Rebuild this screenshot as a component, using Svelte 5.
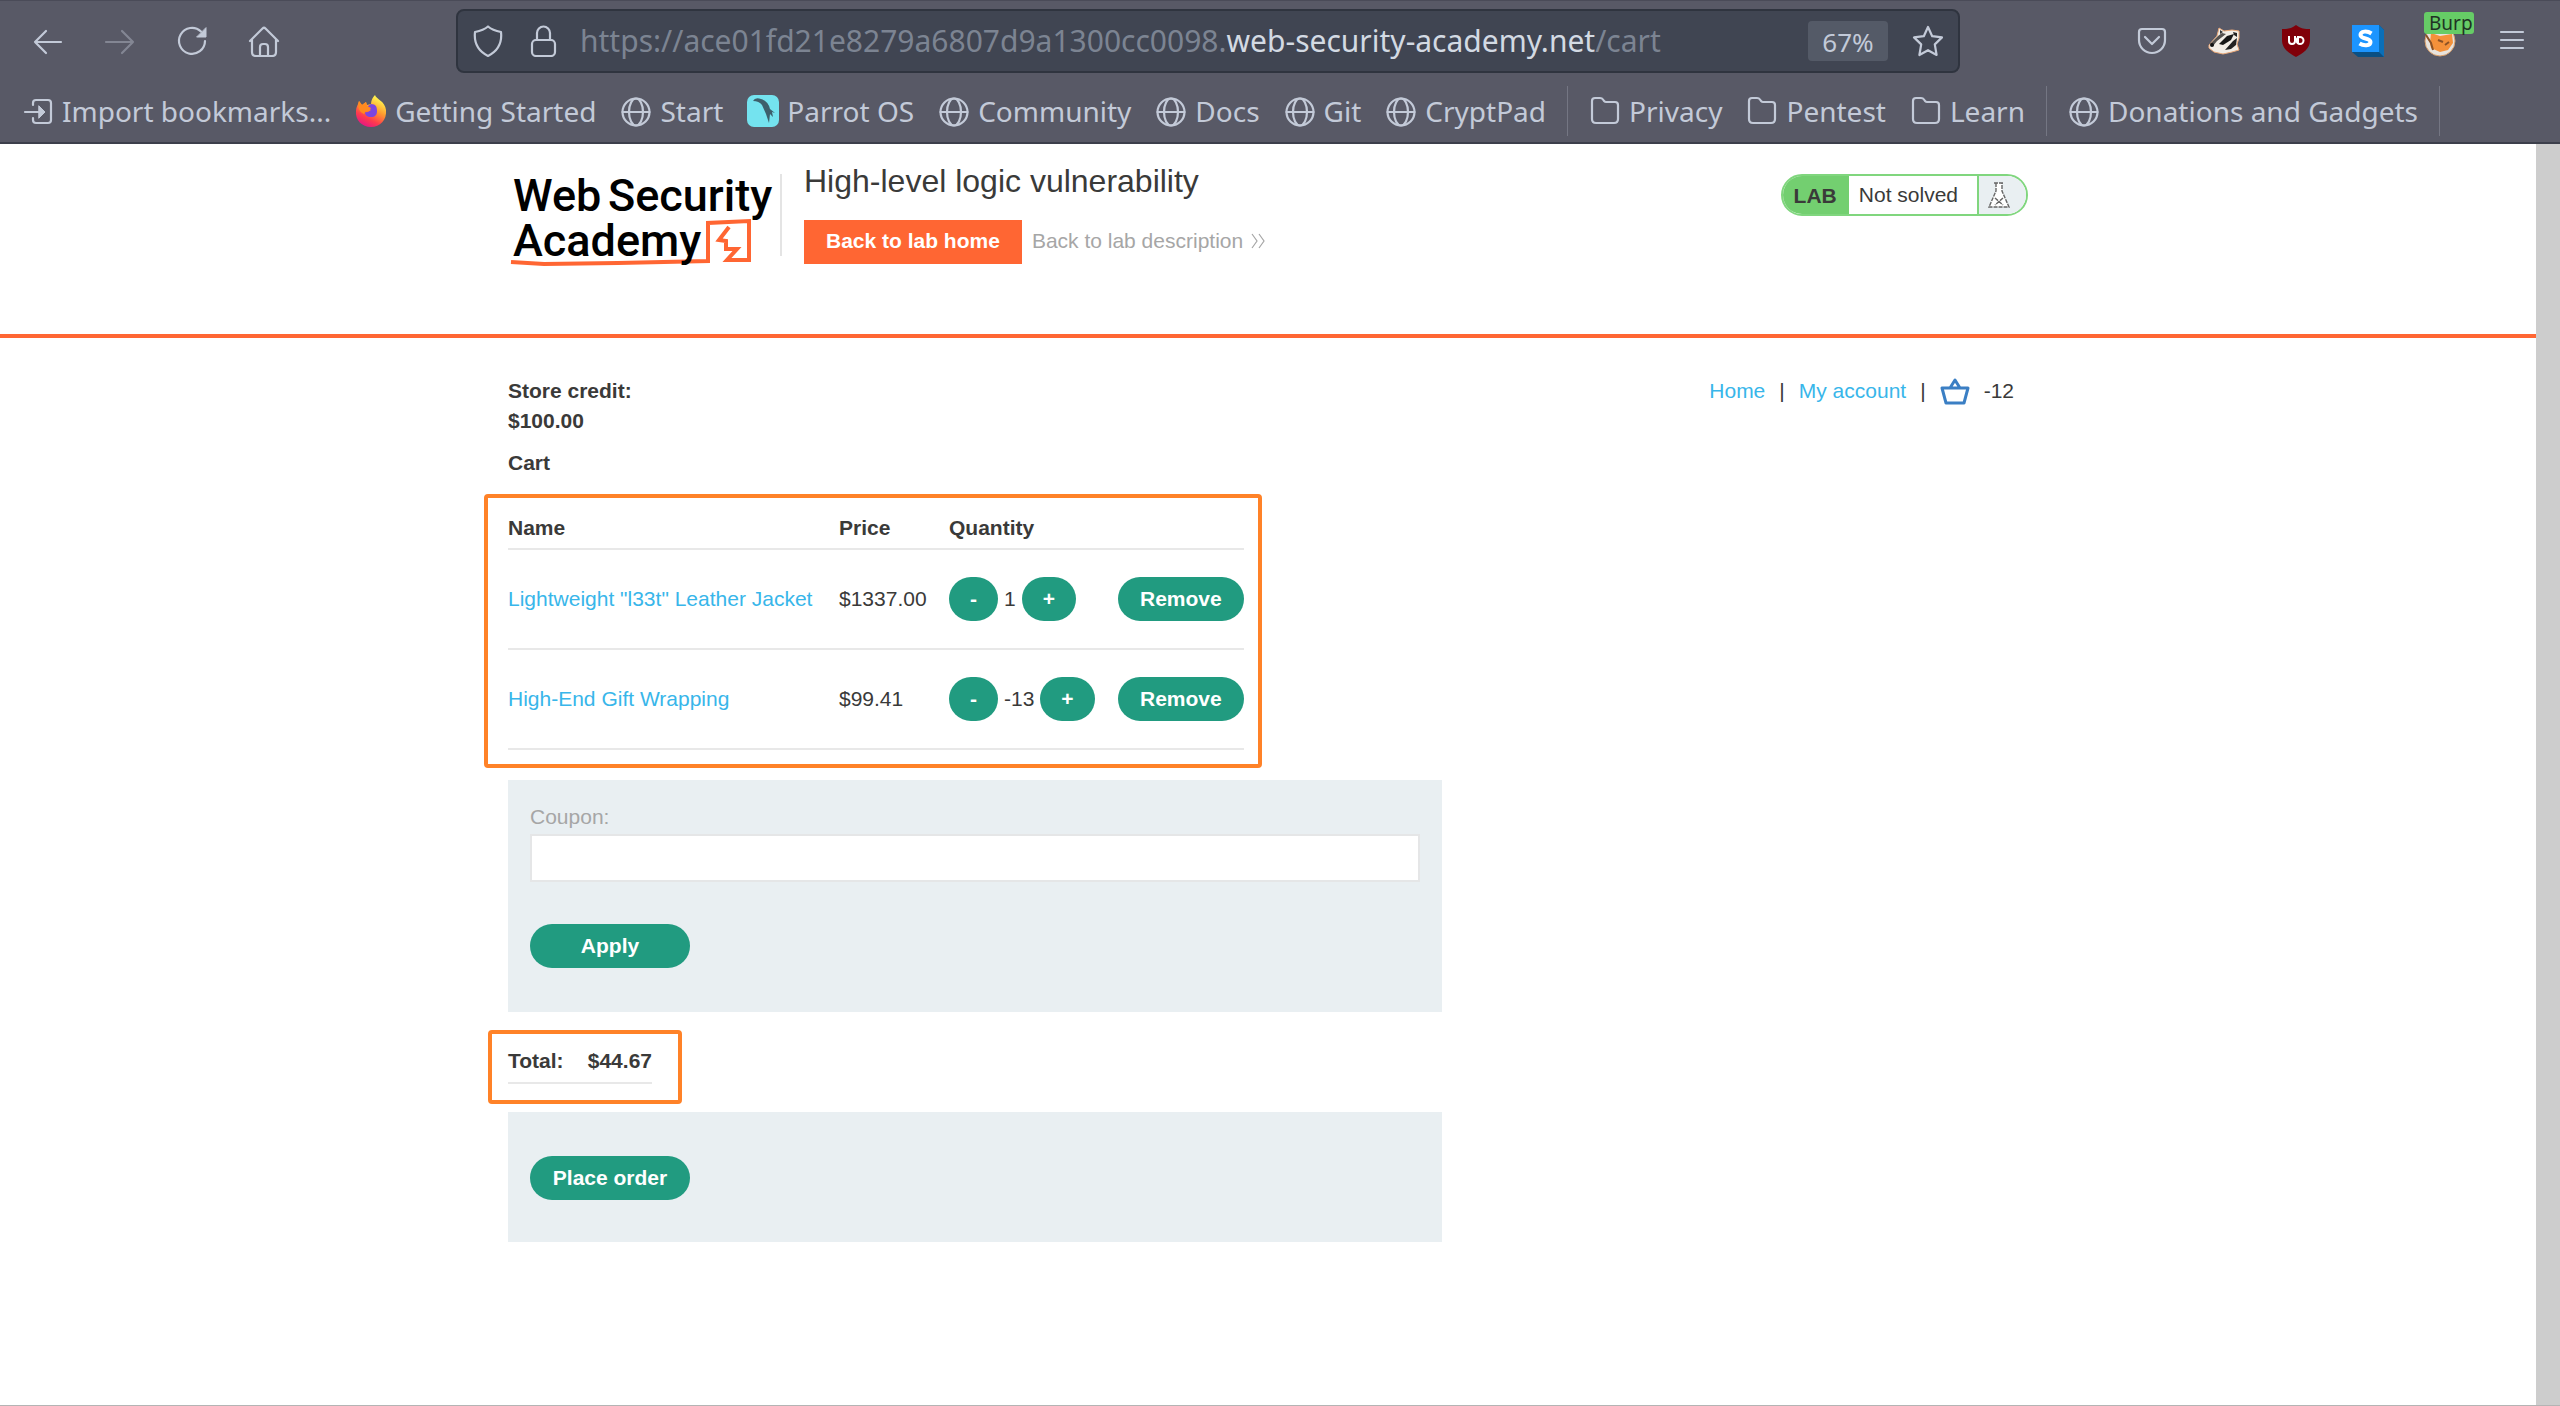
<script>
  const bookmarks = [
    { label: 'Import bookmarks...', icon: 'import' },
    { label: 'Getting Started', icon: 'firefox' },
    { label: 'Start', icon: 'globe' },
    { label: 'Parrot OS', icon: 'parrot' },
    { label: 'Community', icon: 'globe' },
    { label: 'Docs', icon: 'globe' },
    { label: 'Git', icon: 'globe' },
    { label: 'CryptPad', icon: 'globe', last: true },
    { label: 'Privacy', icon: 'folder' },
    { label: 'Pentest', icon: 'folder' },
    { label: 'Learn', icon: 'folder', last: true },
    { label: 'Donations and Gadgets', icon: 'globe', last: true }
  ];

  const items = [
    { name: 'Lightweight "l33t" Leather Jacket', price: '$1337.00', qty: 1 },
    { name: 'High-End Gift Wrapping', price: '$99.41', qty: -13 }
  ];
</script>

<div class="window">
  <header class="chrome">
    <div class="toolbar">
      <nav class="tools" aria-label="Browser navigation">
        <button class="tool" aria-label="Back">
          <svg class="icon" viewBox="0 0 32 32"><path d="M29 17H3M14 6L3 17l11 11" /></svg>
        </button>
        <button class="tool dim" aria-label="Forward">
          <svg class="icon" viewBox="0 0 32 32"><path d="M2 17h27M18 6l11 11-11 11" /></svg>
        </button>
        <button class="tool" aria-label="Reload">
          <svg class="icon" viewBox="0 0 32 32">
            <path d="M29 16a13 13 0 1 1-4-9.500" />
            <path class="solid" d="M30 3v9h-9z" />
          </svg>
        </button>
        <button class="tool" aria-label="Home">
          <svg class="icon" viewBox="0 0 32 32">
            <path d="M2 16L14.500 3.500q1.500-1.500 3 0L30 16M4 14v13q0 4 4 4h16q4 0 4-4V14" />
            <path d="M12 31V22q0-3 3-3h2q3 0 3 3v9" />
          </svg>
        </button>
      </nav>

      <div class="address">
        <svg class="icon" viewBox="0 0 32 32">
          <path d="M16 1.500C12 5 8 6 3 7c-1 9 1 18 13 24C28 25 30 16 29 7C24 6 20 5 16 1.500z" />
        </svg>
        <svg class="icon lock" viewBox="0 0 32 32">
          <rect x="4" y="15" width="23" height="16" rx="4" />
          <path d="M9 15V8a6.500 6.500 0 0 1 13 0v7" />
        </svg>
        <div class="url" role="textbox" tabindex="0" contenteditable="true" aria-label="Address">https://ace01fd21e8279a6807d9a1300cc0098.<b>web-security-academy.net</b>/cart</div>
        <button class="zoom">67%</button>
        <button class="star" aria-label="Bookmark this page">
          <svg class="icon" viewBox="0 0 32 32">
            <path d="M16 2l4.200 9.200 9.800 1.200-7.200 7 1.800 10.600L16 25.200 7.400 30l1.800-10.600-7.200-7 9.800-1.200z" />
          </svg>
        </button>
      </div>

      <div class="tools">
        <button class="tool" aria-label="Pocket">
          <svg class="icon" viewBox="0 0 32 32">
            <path d="M6 4h20q3 0 3 3v8a13 13 0 0 1-26 0V7q0-3 3-3z" />
            <path d="M9 12l7 7 7-7" />
          </svg>
        </button>
        <button class="tool" aria-label="Privacy Badger">
          <svg class="pic" viewBox="0 0 32 32">
            <path d="M1 20L9 11l2-8 5 3 8-1 7 1 0 7-2 6 2 6-7 2-9 2-9-2-5-4z" fill="#f2ede6" stroke="#e9a878" />
            <path d="M2 19l8-8 4-3 4 1-9 7-4 5z" fill="#55524f" />
            <path d="M11 19l8-8 7-2-3 6-8 5z" fill="#171717" />
            <path d="M25 7l4 1v4l-3-2zM25 16l4-3-1 7-5 4-6 1z" fill="#222" />
            <path d="M12 5l3 2-3 2z" fill="#333" />
            <circle cx="4" cy="20" r="2" fill="#111" />
          </svg>
        </button>
        <button class="tool" aria-label="uBlock Origin">
          <svg class="pic" viewBox="0 0 32 32">
            <path d="M16 0c5 4 9 4 14 4v11c0 9-7 13-14 17C9 28 2 24 2 15V4c5 0 9 0 14-4z" fill="#800009" />
            <path d="M9 11v5q0 3 3 3t3-3v-5M18 11v8" fill="none" stroke="#fff" stroke-width="2" />
            <circle cx="20" cy="15.500" r="3.500" fill="none" stroke="#fff" stroke-width="2" />
          </svg>
        </button>
        <button class="tool" aria-label="Stylus">
          <svg class="pic" viewBox="0 0 32 32">
            <path d="M27 0l5 5v27H6l-6-5z" fill="#0b4f82" />
            <path d="M27 0l5 5v27l-5-5z" fill="#0a6fb8" />
            <path d="M0 0h27v27H0z" fill="#1c95ff" />
            <path d="M19.500 8.500C15 5.500 8.500 6 8.500 10c0 4.500 10 2.500 10 7 0 4-7 4-11 1.500" fill="none" stroke="#fff" stroke-width="4" />
          </svg>
        </button>
        <button class="tool badge-host">
          <svg class="pic" viewBox="0 0 32 32">
            <circle cx="16" cy="16" r="15" fill="#e7e3dd" stroke="#d9a06c" />
            <path d="M7 8l9 3 12-2 1 9-5 7-8 2-9-4-1-5z" fill="#f4913a" />
            <path d="M2 10l5 8 2 7M14 15l5 2M21 20l4-3" fill="none" stroke="#8a5226" stroke-width="2" />
          </svg>
          <span class="badge">Burp</span>
        </button>
        <button class="tool" aria-label="Menu">
          <svg class="icon" viewBox="0 0 32 32"><path d="M5 7h22M5 15h22M5 23h22" /></svg>
        </button>
      </div>
    </div>

    <nav class="bookmarks" aria-label="Bookmarks">
      {#each bookmarks as mark}
        <a class="bookmark" href="#bookmark">
          {#if mark.icon === 'globe'}
            <svg class="icon" viewBox="0 0 32 32">
              <circle cx="16" cy="17" r="13.500" />
              <ellipse cx="16" cy="17" rx="7" ry="13.500" />
              <path d="M2.500 17h27" />
            </svg>
          {:else if mark.icon === 'folder'}
            <svg class="icon" viewBox="0 0 32 32">
              <path d="M3 6q0-3 3-3h5q2 0 3 1.500l1 1.500q1 1 2 1h9q3 0 3 3v14q0 4-4 4H7q-4 0-4-4z" />
            </svg>
          {:else if mark.icon === 'import'}
            <svg class="icon" viewBox="0 0 32 32">
              <path d="M11 10V8q0-3 3-3h12q3 0 3 3v17q0 3-3 3H14q-3 0-3-3v-2M3 17h16" />
              <path class="solid" d="M17 11l6 6-6 6z" />
            </svg>
          {:else if mark.icon === 'firefox'}
            <svg class="pic" viewBox="0 0 32 32">
              <defs>
                <linearGradient id="flame" x1="0.8" y1="0" x2="0.3" y2="1">
                  <stop offset="0.1" stop-color="#fff44f" />
                  <stop offset="0.45" stop-color="#ff9a2e" />
                  <stop offset="0.75" stop-color="#ff3a4d" />
                  <stop offset="1" stop-color="#e31587" />
                </linearGradient>
              </defs>
              <path d="M20 0c1 4 10 6 11 15 1 10-6 17-15 17S0 25 1 16c0-4 2-6 3-10l3 4 4-3 1 3 4-1c0-4 2-7 4-9z" fill="url(#flame)" />
              <path d="M16 9c5 0 6 3 6 7s-2 6-6 6-6-2-6-5c3 1 4-1 6-2-2-1-3-2-3-4z" fill="#7b45e0" />
              <path d="M4 6l3 4 4-3 1 4 4 2-2 3c-3 0-4 1-5 3-5-2-7-7-5-13z" fill="#ff8a1f" />
            </svg>
          {:else}
            <svg class="pic" viewBox="0 0 32 32">
              <rect width="32" height="32" rx="7" fill="#74e3ef" />
              <path d="M6 6q2-4 8-2 7 2 9 10l5 4-3-1 1 5-3-3-1 9-3-9-4-9q-3-4-9-4z" fill="#3d5f6b" />
            </svg>
          {/if}
          <span>{mark.label}</span>
        </a>
        {#if mark.last}<span class="divider"></span>{/if}
      {/each}
    </nav>
  </header>

  <div class="viewport">
    <div class="page">
      <header class="lab">
        <div class="container lab-row">
          <svg class="logo" viewBox="0 0 272 104" role="img" aria-label="Web Security Academy">
            <text x="5" y="43">Web</text>
            <text x="100" y="43">Security</text>
            <path d="M3 94L36 96 110 95 200 93V55L241 53V92H219L229 81H218V73L211 72 221 59" fill="none" stroke="#ff6633" stroke-width="4" />
            <text x="5" y="88">Academy</text>
          </svg>
          <div class="title-block">
            <h2>High-level logic vulnerability</h2>
            <div class="actions">
              <a class="lab-home" href="#lab">Back to lab home</a>
              <a class="lab-desc" href="#description">Back to lab description
                <svg viewBox="0 0 16 16"><path d="M2 1l5 7-5 7M9 1l5 7-5 7" /></svg>
              </a>
            </div>
          </div>
          <div class="status">
            <strong>LAB</strong>
            <span class="state">Not solved</span>
            <span class="flask">
              <svg viewBox="0 0 24 28">
                <path d="M7 2h10M9 2v8L2 26h20L15 10V2" />
                <path d="M8 17l8 7M16 17l-8 7" />
              </svg>
            </span>
          </div>
        </div>
      </header>

      <main class="container">
        <div class="top">
          <div class="credit">
            <strong>Store credit:</strong>
            <strong>$100.00</strong>
          </div>
          <nav class="links" aria-label="Shop">
            <a href="#home">Home</a><span>|</span><a href="#account">My account</a><span>|</span>
            <a class="basket" href="#cart" aria-label="Cart">
              <svg viewBox="0 0 30 28"><path d="M2 11h26L24 26H6zM10 11l5-8 5 8" /></svg>
            </a>
            <span>-12</span>
          </nav>
        </div>

        <h1>Cart</h1>

        <div class="marked cart-mark">
          <table class="cart">
            <thead>
              <tr><th class="c-name">Name</th><th class="c-price">Price</th><th class="c-qty">Quantity</th><th class="c-remove"></th></tr>
            </thead>
            <tbody>
              {#each items as item}
                <tr>
                  <td><a href="#product">{item.name}</a></td>
                  <td>{item.price}</td>
                  <td>
                    <div class="qty">
                      <button class="btn step" aria-label="Decrease quantity">-</button>
                      <span>{item.qty}</span>
                      <button class="btn step" aria-label="Increase quantity">+</button>
                    </div>
                  </td>
                  <td><button class="btn">Remove</button></td>
                </tr>
              {/each}
            </tbody>
          </table>
        </div>

        <form class="panel coupon" onsubmit={(e) => e.preventDefault()}>
          <label for="coupon">Coupon:</label>
          <input id="coupon" type="text" />
          <button class="btn wide">Apply</button>
        </form>

        <div class="marked total-mark">
          <table class="total">
            <tbody><tr><th>Total:</th><th>$44.67</th></tr></tbody>
          </table>
        </div>

        <form class="panel order" onsubmit={(e) => e.preventDefault()}>
          <button class="btn wide">Place order</button>
        </form>
      </main>
    </div>
    <div class="scrollbar"></div>
  </div>
</div>

<style>
  :global(body) {
    margin: 0;
    background: #fff;
  }
  * {
    box-sizing: border-box;
  }
  button {
    border: 0;
    padding: 0;
    background: none;
    font: inherit;
    color: inherit;
    cursor: pointer;
  }
  a {
    text-decoration: none;
  }
  svg {
    display: block;
    flex: none;
  }
  .window {
    display: flex;
    flex-direction: column;
    min-height: 100vh;
    border-bottom: 1px solid #b4b4b4;
  }

  /* Browser chrome */
  .chrome {
    background: #585966;
    border-top: 1px solid #4a4b58;
    border-bottom: 2px solid #3c3f4b;
    color: #c3cad8;
    font-family: 'Noto Sans', sans-serif;
    font-size: 28px;
  }
  .toolbar {
    display: flex;
    align-items: center;
    gap: 156px;
    height: 79px;
    padding: 0 12px;
  }
  .tools {
    display: flex;
  }
  .tool {
    display: flex;
    align-items: center;
    justify-content: center;
    width: 72px;
    height: 64px;
  }
  .dim {
    opacity: 0.4;
  }
  .icon,
  .pic {
    width: 32px;
    height: 32px;
  }
  .icon {
    fill: none;
    stroke: #c3cad8;
    stroke-width: 2.2;
    stroke-linecap: round;
    stroke-linejoin: round;
  }
  .icon .solid {
    fill: #c3cad8;
    stroke-width: 1;
  }
  .address {
    flex: 1;
    display: flex;
    align-items: center;
    height: 64px;
    padding: 0 14px;
    background: #404552;
    border: 2px solid #2f343f;
    border-radius: 8px;
  }
  .lock {
    margin: 0 20px 0 24px;
  }
  .url {
    flex: 1;
    color: #7c8492;
    font-size: 30px;
    line-height: 40px;
    white-space: nowrap;
    outline: none;
  }
  .url b {
    color: #d3dae3;
    font-weight: 400;
  }
  .zoom {
    width: 80px;
    height: 40px;
    margin-right: 24px;
    background: #545a67;
    border-radius: 4px;
    font-size: 26px;
    line-height: 42px;
  }
  .badge-host {
    position: relative;
  }
  .badge {
    position: absolute;
    top: 3px;
    left: 20px;
    padding: 0 1px 0 5px;
    background: #66cc66;
    border-radius: 3px;
    color: #1f3324;
    font-size: 19px;
    line-height: 22px;
  }
  .bookmarks {
    display: flex;
    align-items: center;
    gap: 24px;
    height: 62px;
    padding: 0 22px;
    white-space: nowrap;
  }
  .bookmark {
    display: flex;
    align-items: center;
    gap: 8px;
    color: inherit;
    line-height: 40px;
  }
  .divider {
    width: 1px;
    height: 50px;
    margin: 0 -3px;
    background: #747683;
  }

  /* Page */
  .viewport {
    flex: 1;
    display: flex;
  }
  .scrollbar {
    width: 24px;
    background: #cdcdcd;
  }
  .page {
    flex: 1;
    background: #fff;
    color: #3a3a39;
    font-family: 'Liberation Sans', Arial, sans-serif;
    font-size: 21px;
    line-height: 30px;
  }
  .page a {
    color: #38b6ea;
  }
  .container {
    max-width: 1520px;
    margin: 0 auto;
  }
  .lab {
    height: 194px;
    border-bottom: 4px solid #ff6633;
  }
  .lab-row {
    display: flex;
    align-items: flex-start;
    padding-top: 24px;
  }
  .logo {
    width: 272px;
    height: 104px;
  }
  .logo text {
    font-family: Roboto, sans-serif;
    font-size: 45px;
    font-weight: 500;
    fill: #000;
  }
  .title-block {
    margin-top: 6px;
    height: 82px;
    padding-left: 22px;
    border-left: 2px solid #e4e4e4;
  }
  h2 {
    margin: -12px 0 20px;
    font-size: 32px;
    font-weight: 400;
    line-height: 38px;
  }
  .actions {
    display: flex;
    align-items: flex-start;
    gap: 10px;
    line-height: 42px;
  }
  .page .lab-home {
    padding: 0 22px 2px;
    background: #ff6633;
    color: #fff;
    font-weight: 700;
  }
  .page .lab-desc {
    display: flex;
    align-items: center;
    gap: 7px;
    color: #a6a6a6;
  }
  .lab-desc svg {
    width: 16px;
    height: 16px;
    fill: none;
    stroke: #a6a6a6;
    stroke-width: 1.2;
  }
  .status {
    display: flex;
    height: 42px;
    margin: 6px 0 0 auto;
    border: 2px solid #80d67e;
    border-radius: 21px;
    overflow: hidden;
    line-height: 38px;
  }
  .status strong {
    padding: 1px 12px 0 11px;
    background: #73cf70;
  }
  .state {
    padding: 0 19px 0 10px;
  }
  .flask {
    display: flex;
    align-items: center;
    width: 49px;
    padding-left: 8px;
    background: #e9eff2;
    border-left: 2px solid #80d67e;
  }
  .flask svg {
    width: 24px;
    height: 28px;
    fill: #fff;
    stroke: #666;
    stroke-width: 1.4;
    stroke-dasharray: 4 1;
  }

  .top {
    display: flex;
    justify-content: space-between;
    align-items: flex-start;
    padding-top: 38px;
  }
  .credit {
    display: flex;
    flex-direction: column;
  }
  .links {
    display: flex;
    align-items: center;
    gap: 14px;
    padding-right: 14px;
  }
  .basket svg {
    width: 30px;
    height: 28px;
    fill: none;
    stroke: #3b7fc4;
    stroke-width: 3;
    stroke-linejoin: round;
  }
  h1 {
    margin: 12px 0 30px;
    font-size: 21px;
    line-height: 30px;
  }

  /* Highlight frames drawn around a block */
  .marked {
    position: relative;
    width: fit-content;
  }
  .marked::after {
    content: '';
    position: absolute;
    border: 4px solid #ff8228;
    border-radius: 4px;
    pointer-events: none;
  }
  .cart-mark::after {
    inset: -14px -18px -18px -24px;
  }
  .total-mark::after {
    inset: -10px -30px -20px -20px;
  }

  table {
    border-collapse: separate;
    border-spacing: 0;
  }
  th,
  td {
    padding: 0;
    border-bottom: 2px solid #e8e8e8;
    text-align: left;
    white-space: nowrap;
  }
  .cart {
    table-layout: fixed;
    width: 736px;
  }
  .cart th {
    height: 42px;
  }
  .cart td {
    height: 100px;
  }
  .c-name {
    width: 331px;
  }
  .c-price {
    width: 110px;
  }
  .c-qty {
    width: 169px;
  }
  .c-remove {
    width: 126px;
  }
  .qty {
    display: flex;
    align-items: center;
    gap: 6px;
  }
  .btn {
    display: block;
    height: 44px;
    padding: 0 22px;
    background: #219b80;
    border-radius: 22px;
    color: #fff;
    font-weight: 700;
    line-height: 42px;
  }
  .step {
    padding: 0 21px;
  }
  .wide {
    width: 160px;
  }
  .panel {
    width: 934px;
    max-width: 100%;
    padding: 22px;
    background: #e9eff2;
  }
  .coupon {
    margin: 30px 0 28px;
    padding-bottom: 44px;
  }
  .coupon label {
    display: block;
    margin-bottom: 2px;
    color: #a6a6a6;
  }
  .coupon input {
    display: block;
    width: 100%;
    height: 48px;
    margin-bottom: 42px;
    padding: 0 12px;
    background: #fff;
    border: 2px solid #e5e6e7;
    font: inherit;
  }
  .total {
    width: 144px;
  }
  .total th {
    height: 44px;
  }
  .total th + th {
    text-align: right;
  }
  .btn.wide {
    padding: 0;
  }
  .order {
    margin-top: 28px;
    padding: 44px 22px 42px;
  }
</style>
